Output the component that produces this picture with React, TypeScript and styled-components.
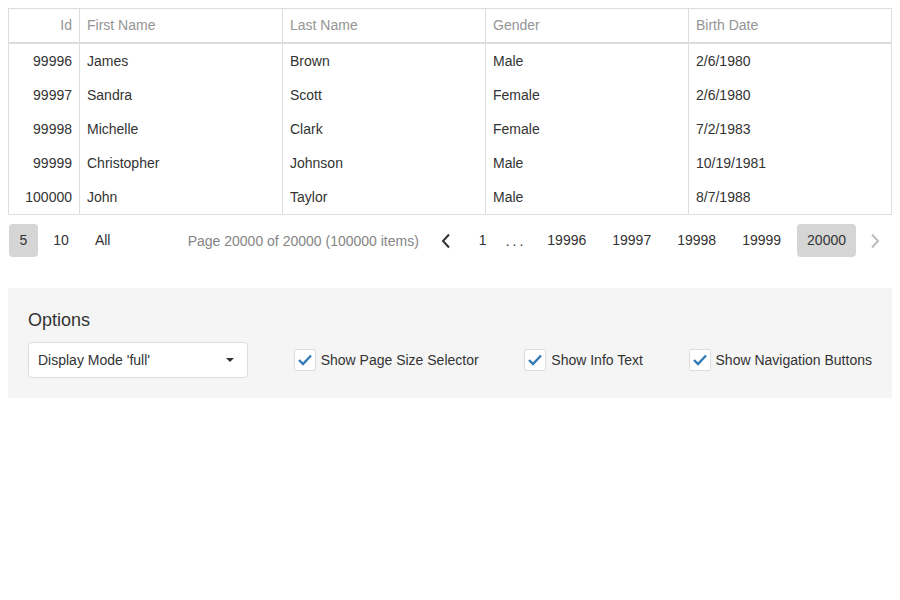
import React from 'react'
import styled, { createGlobalStyle } from 'styled-components'

const GlobalStyle = createGlobalStyle`
	body {
		margin: 8px;
		font-family: 'Liberation Sans', Arial, sans-serif;
		font-size: 14px;
		color: #333;
		background: #fff;
	}
`

type Employee = {
	id: number
	firstName: string
	lastName: string
	gender: string
	birthDate: string
}

const rows: Employee[] = [
	{ id: 99996, firstName: 'James', lastName: 'Brown', gender: 'Male', birthDate: '2/6/1980' },
	{ id: 99997, firstName: 'Sandra', lastName: 'Scott', gender: 'Female', birthDate: '2/6/1980' },
	{ id: 99998, firstName: 'Michelle', lastName: 'Clark', gender: 'Female', birthDate: '7/2/1983' },
	{ id: 99999, firstName: 'Christopher', lastName: 'Johnson', gender: 'Male', birthDate: '10/19/1981' },
	{ id: 100000, firstName: 'John', lastName: 'Taylor', gender: 'Male', birthDate: '8/7/1988' },
]

const columns = ['Id', 'First Name', 'Last Name', 'Gender', 'Birth Date']

const Grid = styled.div`
	border: 1px solid #ddd;
	display: grid;
	grid-template-columns: 70px 1fr 1fr 1fr 1fr;
`

const HeadCell = styled.div<{ $right?: boolean; $first?: boolean }>`
	height: 33px;
	line-height: 33px;
	padding: 0 7px;
	color: #959595;
	border-bottom: 2px solid #ddd;
	border-left: ${(p) => (p.$first ? 'none' : '1px solid #ddd')};
	text-align: ${(p) => (p.$right ? 'right' : 'left')};
	white-space: nowrap;
	overflow: hidden;
`

const Cell = styled.div<{ $right?: boolean; $first?: boolean }>`
	height: 34px;
	line-height: 34px;
	padding: 0 7px;
	border-left: ${(p) => (p.$first ? 'none' : '1px solid #ddd')};
	text-align: ${(p) => (p.$right ? 'right' : 'left')};
	white-space: nowrap;
`

const Pager = styled.div`
	display: flex;
	align-items: center;
	padding: 9px 1px 0;
`

const PageSize = styled.div<{ $selected?: boolean }>`
	height: 33px;
	line-height: 33px;
	padding: 0 10.5px;
	margin-right: 5px;
	border-radius: 4px;
	background: ${(p) => (p.$selected ? '#d5d5d5' : 'transparent')};
`

const Info = styled.div`
	margin-left: auto;
	margin-right: 11px;
	color: #858585;
	white-space: nowrap;
`

const Page = styled.div<{ $selected?: boolean }>`
	height: 33px;
	line-height: 33px;
	padding: 0 10px;
	margin: 0 3px;
	border-radius: 4px;
	background: ${(p) => (p.$selected ? '#d5d5d5' : 'transparent')};
`

const Dots = styled.div`
	margin: 0 8px 0 6px;
	letter-spacing: 3px;
`

const NavButton = styled.div<{ $disabled?: boolean; $after?: number }>`
	width: 26px;
	height: 33px;
	margin: 0 ${(p) => p.$after ?? 3}px 0 3px;
	display: flex;
	align-items: center;
	justify-content: center;
	color: ${(p) => (p.$disabled ? '#bdbdbd' : '#333')};
`

const Options = styled.div`
	margin-top: 31px;
	background: #f5f5f5;
	padding: 20px;
`

const Caption = styled.div`
	font-size: 18px;
	line-height: 24px;
	margin-bottom: 10px;
	color: #333;
`

const OptionRow = styled.div`
	display: flex;
	align-items: center;
	justify-content: space-between;
`

const Select = styled.div`
	box-sizing: border-box;
	width: 220px;
	height: 36px;
	background: #fff;
	border: 1px solid #ddd;
	border-radius: 4px;
	display: flex;
	align-items: center;
	justify-content: space-between;
	padding: 0 13px 0 9px;
`

const Caret = styled.span`
	width: 0;
	height: 0;
	border-left: 4px solid transparent;
	border-right: 4px solid transparent;
	border-top: 4px solid #333;
`

const CheckLabel = styled.label`
	display: flex;
	align-items: center;
	gap: 5px;
	white-space: nowrap;
`

const Box = styled.span`
	box-sizing: border-box;
	width: 22px;
	height: 22px;
	background: #fff;
	border: 1px solid #ddd;
	border-radius: 2px;
	display: flex;
	align-items: center;
	justify-content: center;
`

const Chevron = ({ dir }: { dir: 'left' | 'right' }) => (
	<svg width="10" height="16" viewBox="0 0 10 16">
		<polyline
			points={dir === 'left' ? '8,1.5 2,8 8,14.5' : '2,1.5 8,8 2,14.5'}
			fill="none"
			stroke="currentColor"
			strokeWidth="2"
		/>
	</svg>
)

const Check = ({ label }: { label: string }) => (
	<CheckLabel>
		<Box>
			<svg width="16" height="16" viewBox="0 0 16 16">
				<polyline
					points="2,8 6,12 14,3.5"
					fill="none"
					stroke="#337ab7"
					strokeWidth="2.4"
				/>
			</svg>
		</Box>
		{label}
	</CheckLabel>
)

export default function App() {
	return (
		<>
			<GlobalStyle />
			<Grid>
				{columns.map((c, i) => (
					<HeadCell key={c} $first={i === 0} $right={i === 0}>
						{c}
					</HeadCell>
				))}
				{rows.map((r) => (
					<React.Fragment key={r.id}>
						<Cell $first $right>
							{r.id}
						</Cell>
						<Cell>{r.firstName}</Cell>
						<Cell>{r.lastName}</Cell>
						<Cell>{r.gender}</Cell>
						<Cell>{r.birthDate}</Cell>
					</React.Fragment>
				))}
			</Grid>
			<Pager>
				<PageSize $selected>5</PageSize>
				<PageSize>10</PageSize>
				<PageSize>All</PageSize>
				<Info>Page 20000 of 20000 (100000 items)</Info>
				<NavButton $after={7}>
					<Chevron dir="left" />
				</NavButton>
				<Page>1</Page>
				<Dots>...</Dots>
				{[19996, 19997, 19998, 19999].map((n) => (
					<Page key={n}>{n}</Page>
				))}
				<Page $selected>20000</Page>
				<NavButton $disabled>
					<Chevron dir="right" />
				</NavButton>
			</Pager>
			<Options>
				<Caption>Options</Caption>
				<OptionRow>
					<Select>
						<span>Display Mode 'full'</span>
						<Caret />
					</Select>
					<Check label="Show Page Size Selector" />
					<Check label="Show Info Text" />
					<Check label="Show Navigation Buttons" />
				</OptionRow>
			</Options>
		</>
	)
}
